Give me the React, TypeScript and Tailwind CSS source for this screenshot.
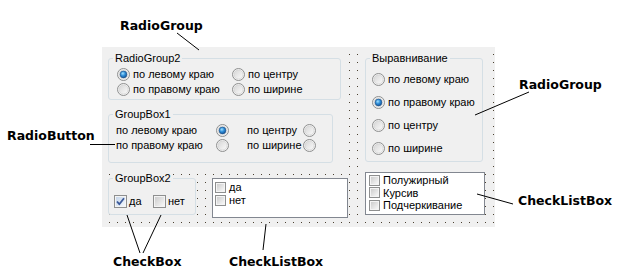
import React from 'react';

const Radio = ({ checked }: { checked?: boolean }) => (
  <svg width="13" height="13" viewBox="0 0 13 13" className="shrink-0">
    <circle cx="6.5" cy="6.5" r="6" fill="#f2f2f2" stroke="#8e8f8f" />
    <circle cx="6.5" cy="6.5" r="4.5" fill="url(#rbFill)" stroke="#cfcfcf" strokeWidth="0.6" />
    {checked && <circle cx="6.5" cy="6.5" r="3.4" fill="url(#rbDot)" stroke="#1d4f86" strokeWidth="0.6" />}
  </svg>
);

const Check = ({ checked, small }: { checked?: boolean; small?: boolean }) => {
  const s = small ? 11 : 13;
  return (
    <svg width={s} height={s} viewBox={`0 0 ${s} ${s}`} className="shrink-0">
      <rect x="0.5" y="0.5" width={s - 1} height={s - 1} fill="#f4f4f4" stroke="#8e8f8f" />
      <rect x="2" y="2" width={s - 4} height={s - 4} fill={checked ? 'url(#cbBlue)' : 'url(#cbFill)'} />
      {checked && (
        <path d="M3 6.5 L5.3 9.2 L10 3.2" fill="none" stroke="#3c5a9a" strokeWidth="1.8" strokeLinejoin="round" />
      )}
    </svg>
  );
};

const RadioItem = ({ label, checked }: { label: string; checked?: boolean }) => (
  <div className="flex items-center gap-[3px] h-[15px]">
    <Radio checked={checked} />
    <span>{label}</span>
  </div>
);

const RadioLeft = ({ label, checked, w }: { label: string; checked?: boolean; w: string }) => (
  <div className={`flex items-center justify-between h-[15px] ${w}`}>
    <span>{label}</span>
    <Radio checked={checked} />
  </div>
);

const ListItem = ({ label, h }: { label: string; h: string }) => (
  <div className={`flex items-center gap-[3px] ${h}`}>
    <Check small />
    <span>{label}</span>
  </div>
);

const Label = ({ text, pos }: { text: string; pos: string }) => (
  <div className={`absolute text-[12.5px] leading-[12.5px] font-bold text-black font-['DejaVu_Sans',Verdana,sans-serif] ${pos}`}>
    {text}
  </div>
);

export default function App() {
  return (
    <div className="relative w-[626px] h-[277px] bg-white overflow-hidden text-[11px] text-black font-['Liberation_Sans',Arial,sans-serif]">
      <svg width="0" height="0" className="absolute">
        <defs>
          <linearGradient id="rbFill" x1="0" y1="0" x2="1" y2="1">
            <stop offset="0" stopColor="#d6d6d6" />
            <stop offset="1" stopColor="#fbfbfb" />
          </linearGradient>
          <radialGradient id="rbDot" cx="0.4" cy="0.35" r="0.7">
            <stop offset="0" stopColor="#9fe0ff" />
            <stop offset="0.5" stopColor="#2b8ad6" />
            <stop offset="1" stopColor="#14508f" />
          </radialGradient>
          <linearGradient id="cbFill" x1="0" y1="0" x2="1" y2="1">
            <stop offset="0" stopColor="#cdcdcd" />
            <stop offset="1" stopColor="#f7f7f7" />
          </linearGradient>
          <linearGradient id="cbBlue" x1="0" y1="0" x2="1" y2="1">
            <stop offset="0" stopColor="#c6d6ea" />
            <stop offset="1" stopColor="#f2f6fb" />
          </linearGradient>
        </defs>
      </svg>

      {/* form with designer grid */}
      <div className="ml-[102px] mt-[47px] w-[393px] h-[180px] flex bg-[#f0f0f0] bg-[linear-gradient(to_right,#f0f0f0_7px,transparent_7px),linear-gradient(to_bottom,#f0f0f0_7px,#4a4030_7px)] bg-[length:8px_8px]">
        {/* left column */}
        <div className="w-[258px] flex flex-col">
          <div className="w-[243px] h-[123px] bg-[#f0f0f0] pl-[6px] pt-[5px] flex flex-col">
            <fieldset className="w-[233px] h-[48px] bg-[#f0f0f0] border border-[#d5dfe5] rounded-[3px]">
              <legend className="ml-[4px] px-[2px] leading-[13px]">RadioGroup2</legend>
              <div className="grid grid-cols-[115px_auto] pl-[8px] pt-[2px]">
                <RadioItem label="по левому краю" checked />
                <RadioItem label="по центру" />
                <RadioItem label="по правому краю" />
                <RadioItem label="по ширине" />
              </div>
            </fieldset>
            <fieldset className="mt-[8px] w-[225px] h-[55px] bg-[#f0f0f0] border border-[#d5dfe5] rounded-[3px]">
              <legend className="ml-[4px] px-[2px] leading-[13px]">GroupBox1</legend>
              <div className="grid grid-cols-[113px_69px] gap-x-[18px] pl-[7px] pt-[2px]">
                <RadioLeft label="по левому краю" checked w="w-[113px]" />
                <RadioLeft label="по центру" w="w-[69px]" />
                <RadioLeft label="по правому краю" w="w-[113px]" />
                <RadioLeft label="по ширине" w="w-[69px]" />
              </div>
            </fieldset>
          </div>
          <div className="flex items-start">
            <fieldset className="ml-[6px] mt-[2px] w-[88px] h-[43px] bg-[#f0f0f0] border border-[#d5dfe5] rounded-[3px]">
              <legend className="ml-[4px] px-[2px] leading-[13px] bg-[#f0f0f0]">GroupBox2</legend>
              <div className="flex items-center pl-[5px] pt-[9px]">
                <div className="flex items-center gap-[2px] w-[39px] h-[14px]">
                  <Check checked />
                  <span>да</span>
                </div>
                <div className="flex items-center gap-[2px] h-[14px]">
                  <Check />
                  <span>нет</span>
                </div>
              </div>
            </fieldset>
            <div className="ml-[16px] mt-[8px] w-[136px] h-[40px] bg-white border border-[#828790] pl-[2px] pt-[2px]">
              <ListItem label="да" h="h-[13px]" />
              <ListItem label="нет" h="h-[13px]" />
            </div>
          </div>
        </div>

        {/* right column */}
        <div className="w-[135px] flex flex-col">
          <div className="w-[130px] h-[121px] bg-[#f0f0f0] pl-[5px] pt-[5px]">
            <fieldset className="w-[118px] h-[110px] bg-[#f0f0f0] border border-[#d5dfe5] rounded-[3px]">
              <legend className="ml-[4px] px-[2px] leading-[13px]">Выравнивание</legend>
              <div className="flex flex-col gap-[8px] pl-[6px] pt-[7px]">
                <RadioItem label="по левому краю" />
                <RadioItem label="по правому краю" checked />
                <RadioItem label="по центру" />
                <RadioItem label="по ширине" />
              </div>
            </fieldset>
          </div>
          <div className="ml-[5px] mt-[4px] w-[120px] h-[43px] bg-white border border-[#828790] pl-[3px] pt-[1px]">
            <ListItem label="Полужирный" h="h-[12.5px]" />
            <ListItem label="Курсив" h="h-[12.5px]" />
            <ListItem label="Подчеркивание" h="h-[12.5px]" />
          </div>
        </div>
      </div>

      {/* annotations */}
      <svg className="absolute inset-0 pointer-events-none" width="626" height="277">
        <g stroke="#000" strokeWidth="1" fill="none">
          <line x1="177" y1="33" x2="199" y2="50" />
          <line x1="90" y1="144.5" x2="115" y2="144.5" />
          <line x1="127" y1="215" x2="140" y2="253" />
          <line x1="161" y1="215" x2="143" y2="253" />
          <line x1="266" y1="224" x2="263" y2="250" />
          <line x1="475" y1="115" x2="529" y2="92" />
          <line x1="477" y1="194" x2="513" y2="204" />
        </g>
      </svg>
      <Label text="RadioGroup" pos="left-[120px] top-[19.5px]" />
      <Label text="RadioButton" pos="left-[7px] top-[129.5px]" />
      <Label text="CheckBox" pos="left-[113px] top-[255.5px]" />
      <Label text="CheckListBox" pos="left-[229px] top-[256px]" />
      <Label text="RadioGroup" pos="left-[519px] top-[78.5px]" />
      <Label text="CheckListBox" pos="left-[518px] top-[195px]" />
    </div>
  );
}
